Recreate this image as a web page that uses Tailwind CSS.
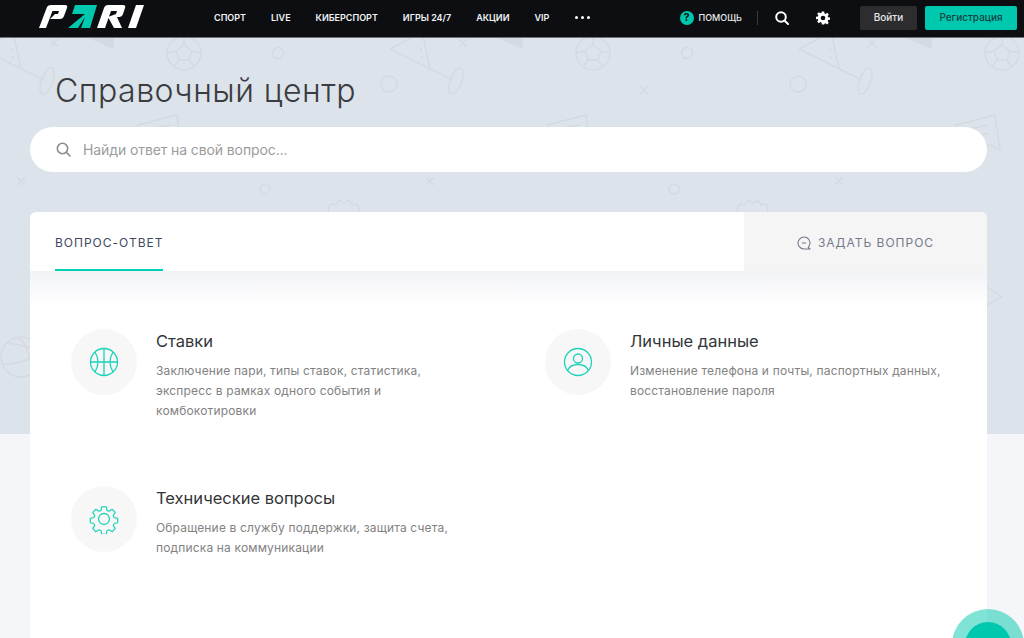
<!DOCTYPE html>
<html lang="ru">
<head>
    <meta charset="UTF-8">
    <title>Справочный центр</title>
    <script src="https://cdn.jsdelivr.net/npm/@tailwindcss/browser@4"></script>
</head>
<body class="bg-[#f5f6f9] font-[Inter,sans-serif] h-[638px] overflow-hidden relative">

    <!-- header -->
    <header class="h-[38px] bg-[#0d0e12] border-b border-[#6f7276] flex items-center pb-[2px] relative z-10">
        <svg class="ml-[39px] w-[105px] h-[23px] self-start mt-[5px] shrink-0" viewBox="0 0 105 23">
            <path d="M0 23 L8 2 Q9 0 12 0 H26 Q29 0 28 3 L25 11 Q24 14 21 14 H11 L16 9 H19 L20 6 H13.5 L7 23 Z" fill="#fff"/>
            <path d="M29 23 L46 9 H33 L36 0 H58 L51 23 H42 L46 12 L39 23 Z" fill="#00c8ae"/>
            <path d="M58 23 L65 3 Q66 0 69 0 H84 Q87 0 86 3 L84 9 Q83 12 80 12 H78 L83 23 H75 L69 12 L77 9 L78 6 H72 L66 23 Z" fill="#fff"/>
            <path d="M89 23 L97 0 H105 L97 23 Z" fill="#fff"/>
        </svg>
        <nav class="ml-[70px] flex items-center gap-[25px] text-[9px] font-semibold text-[#f1f3f5] whitespace-nowrap">
            <span>СПОРТ</span>
            <span>LIVE</span>
            <span>КИБЕРСПОРТ</span>
            <span>ИГРЫ 24/7</span>
            <span>АКЦИИ</span>
            <span>VIP</span>
            <span class="flex gap-[3px] ml-[1px]">
                <i class="w-[3px] h-[3px] rounded-full bg-white"></i>
                <i class="w-[3px] h-[3px] rounded-full bg-white"></i>
                <i class="w-[3px] h-[3px] rounded-full bg-white"></i>
            </span>
        </nav>
        <div class="ml-auto flex items-center">
            <span class="w-[14px] h-[14px] rounded-full bg-[#00c8ae] flex items-center justify-center text-[11px] font-bold text-[#0d0e12]">?</span>
            <span class="ml-[5px] text-[9px] font-medium text-[#e8e8e8]">ПОМОЩЬ</span>
            <span class="ml-[15px] w-px h-[14px] bg-[#3a3b3f]"></span>
            <svg class="ml-[17px] w-[14px] h-[14px]" viewBox="0 0 14 14" fill="none" stroke="#fff" stroke-width="2"><circle cx="6" cy="6" r="4.8"/><path d="M9.5 9.5 13 13" stroke-linecap="round"/></svg>
            <svg class="ml-[27px] w-[14px] h-[14px]" viewBox="0 0 24 24" fill="#fff"><path fill-rule="evenodd" d="M10 1h4l.6 3.2 1.9.8 2.7-1.9 2.8 2.8-1.9 2.7.8 1.9 3.1.5v4l-3.2.6-.8 1.9 1.9 2.7-2.8 2.8-2.7-1.9-1.9.8L14 23h-4l-.6-3.2-1.9-.8-2.7 1.9-2.8-2.8 1.9-2.7-.8-1.9L0 14v-4l3.2-.6.8-1.9-1.9-2.7 2.8-2.8 2.7 1.9 1.9-.8ZM12 8a4 4 0 1 0 0 8 4 4 0 0 0 0-8Z"/></svg>
            <button class="ml-[30px] w-[57px] h-[24px] rounded-[2px] bg-[#2d2d2f] text-[10px] font-medium text-[#e6e6e6]">Войти</button>
            <button class="ml-[8px] mr-[7px] w-[92px] h-[24px] rounded-[2px] bg-[#00c8ae] text-[10px] font-medium text-[#12433f]">Регистрация</button>
        </div>
    </header>

    <!-- hero with the doodle background -->
    <section class="h-[396px] bg-[#dde3ea] relative overflow-hidden">
        <svg class="absolute inset-0 w-full h-full" fill="none">
            <defs>
                <pattern id="doodles" x="350" y="-38" width="409" height="500" patternUnits="userSpaceOnUse" fill="none" stroke="#d4dae2" stroke-width="1.5">
                    <path d="M40 49 L72 32 L80 68 M40 49 L103 80 M71 48v3 M72 56v3"/>
                    <ellipse cx="106" cy="81" rx="5.5" ry="14" transform="rotate(20 106 81)"/>
                    <circle cx="39" cy="84" r="8"/>
                    <path d="M109 39l8 8m0-8l-8 8"/>
                    <path d="M140 34l32 14V34Z" fill="#d4dae2"/>
                    <circle cx="243" cy="53" r="17"/>
                    <path d="M243 45l8 6-3 9h-10l-3-9Z M243 36v9 M226 53l9-2 M260 53l-9-2 M233 67l5-7 M253 67l-5-7"/>
                    <circle cx="337" cy="53" r="5.5"/>
                    <path d="M290 86l8 8m0-8l-8 8"/>
                    <path d="M197 125L236 115L241 150L232 145L203 152Z M205 130l24-5 M206 138l24-5"/>
                    <path d="M76 177l8 8m0-8l-8 8"/>
                    <circle cx="324" cy="189" r="5"/>
                    <path d="M388 214q-2-6 2-10l5 1 3-5 5 3 5-3 3 5 5-1q3 4 1 10"/>
                    <path d="M-21 214q-2-6 2-10l5 1 3-5 5 3 5-3 3 5 5-1q3 4 1 10"/>
                    <circle cx="80" cy="357" r="20"/>
                    <path d="M61 365q20-2 38-10 M66 343q18 2 32 8 M76 337q14 8 14 38"/>
                    <path d="M228 287l15 10-15 8"/>
                </pattern>
            </defs>
            <rect width="100%" height="100%" fill="url(#doodles)"/>
        </svg>
        <h1 class="relative ml-[55px] pt-[31px] text-[32px] leading-[44px] font-light tracking-[0.5px] text-[#3a3c40]">Справочный центр</h1>
        <div class="relative ml-[30px] w-[957px] mt-[14px] h-[45px] rounded-full bg-white flex items-center pl-[26px]">
            <svg class="w-[15px] h-[15px]" viewBox="0 0 15 15" fill="none" stroke="#8c8c8c" stroke-width="1.6"><circle cx="6.5" cy="6.5" r="5.2"/><path d="M10.4 10.4 14 14" stroke-linecap="round"/></svg>
            <span class="ml-[12px] text-[14px] tracking-[-0.1px] text-[#9c9c9c]">Найди ответ на свой вопрос...</span>
        </div>
    </section>

    <!-- help card -->
    <main class="absolute left-[30px] top-[212px] w-[957px] h-[426px] bg-white rounded-t-[6px] overflow-hidden">
        <div class="flex h-[59px] relative">
            <div class="ml-[25px] w-[108px] h-[59px] border-b-2 border-[#00d0b6] text-[12px] font-normal tracking-[1px] text-[#3e4763] pt-[23px] leading-[16px] whitespace-nowrap">ВОПРОС-ОТВЕТ</div>
            <div class="ml-auto w-[243px] bg-[#f5f5f6] flex items-center justify-center gap-[7px] pt-[2px] text-[12px] font-normal tracking-[1px] text-[#767a8a]">
                <svg class="w-[14px] h-[14px]" viewBox="0 0 14 14" fill="none" stroke="#767a8a" stroke-width="1.1" stroke-linejoin="round"><path d="M7 13A6 6 0 1 1 11.2 11.3L13 13Z"/><path d="M4.8 7h4.4"/></svg>
                <span>ЗАДАТЬ ВОПРОС</span>
            </div>
        </div>
        <div class="h-[36px] bg-gradient-to-b from-[#f2f3f6] to-white"></div>

        <div class="grid grid-cols-2 pl-[41px] pt-[22px]">
            <article class="flex h-[157px]">
                <div class="w-[66px] h-[66px] rounded-full bg-[#f7f7f7] flex items-center justify-center shrink-0">
                    <svg class="w-[30px] h-[30px]" viewBox="0 0 30 30" fill="none" stroke="#1cd3b8" stroke-width="1.3"><circle cx="15" cy="15" r="13.5"/><path d="M15 1.5v27M1.5 15h27M6 5q6 10 0 20M24 5q-6 10 0 20"/></svg>
                </div>
                <div class="ml-[19px] w-[290px]">
                    <h2 class="text-[16.5px] leading-[24px] font-normal text-[#333538]">Ставки</h2>
                    <p class="mt-[8px] text-[12px] leading-[20px] tracking-[0.16px] text-[#828282]">Заключение пари, типы ставок, статистика, экспресс в рамках одного события и комбокотировки</p>
                </div>
            </article>
            <article class="flex h-[157px] ml-[16px]">
                <div class="w-[66px] h-[66px] rounded-full bg-[#f7f7f7] flex items-center justify-center shrink-0">
                    <svg class="w-[30px] h-[30px]" viewBox="0 0 30 30" fill="none" stroke="#1cd3b8" stroke-width="1.3"><circle cx="15" cy="15" r="13.5"/><circle cx="15" cy="11.5" r="4.5"/><path d="M4.5 23.5Q7 17.5 15 17.5T25.5 23.5"/></svg>
                </div>
                <div class="ml-[19px] w-[320px]">
                    <h2 class="text-[16.5px] leading-[24px] font-normal text-[#333538]">Личные данные</h2>
                    <p class="mt-[8px] text-[12px] leading-[20px] tracking-[0.16px] text-[#828282]">Изменение телефона и почты, паспортных данных, восстановление пароля</p>
                </div>
            </article>
            <article class="flex">
                <div class="w-[66px] h-[66px] rounded-full bg-[#f7f7f7] flex items-center justify-center shrink-0">
                    <svg class="w-[30px] h-[30px]" viewBox="0 0 30 30" fill="none" stroke="#1cd3b8" stroke-width="1.3" stroke-linejoin="round"><circle cx="15" cy="15" r="5.5"/><path d="M12.5 1.5h5l.8 3.9 2.4 1 3.3-2.2 3.5 3.5-2.2 3.3 1 2.4 3.9.8v5l-3.9.8-1 2.4 2.2 3.3-3.5 3.5-3.3-2.2-2.4 1-.8 3.9h-5l-.8-3.9-2.4-1-3.3 2.2-3.5-3.5 2.2-3.3-1-2.4-3.9-.8v-5l3.9-.8 1-2.4-2.2-3.3 3.5-3.5 3.3 2.2 2.4-1Z" transform="translate(1.5 1.5) scale(.9)"/></svg>
                </div>
                <div class="ml-[19px] w-[310px]">
                    <h2 class="text-[16.5px] leading-[24px] font-normal text-[#333538]">Технические вопросы</h2>
                    <p class="mt-[8px] text-[12px] leading-[20px] tracking-[0.16px] text-[#828282]">Обращение в службу поддержки, защита счета, подписка на коммуникации</p>
                </div>
            </article>
        </div>
    </main>

    <!-- chat button, cut off by the window -->
    <svg class="absolute left-[952px] top-[609px] w-[72px] h-[29px] z-20" viewBox="0 0 72 29">
        <circle cx="36" cy="36" r="36" fill="#00c8ae" fill-opacity="0.5"/>
        <circle cx="36" cy="36" r="23" fill="#00c8ae"/>
    </svg>
</body>
</html>
